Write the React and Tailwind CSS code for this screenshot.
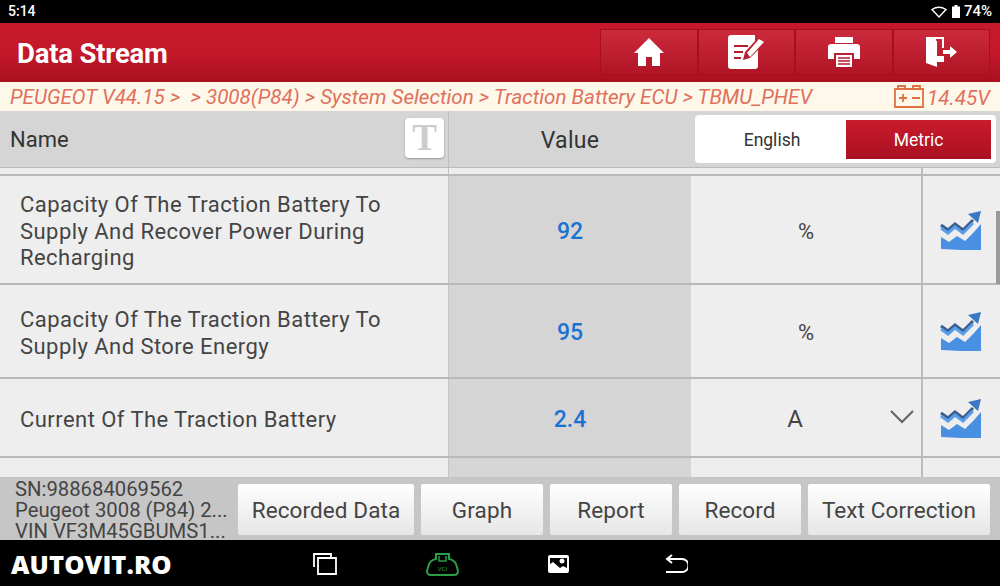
const rows = [
  { name: ['Capacity Of The Traction Battery To', 'Supply And Recover Power During', 'Recharging'], value: '92', unit: '%', h: 'h-[109px]' },
  { name: ['Capacity Of The Traction Battery To', 'Supply And Store Energy'], value: '95', unit: '%', h: 'h-[94px]' },
  { name: ['Current Of The Traction Battery'], value: '2.4', unit: 'A', h: 'h-[79px]', select: true },
];

const actions = [
  { label: 'Recorded Data', w: 'w-[176px]' },
  { label: 'Graph', w: 'w-[122px]' },
  { label: 'Report', w: 'w-[122px]' },
  { label: 'Record', w: 'w-[122px]' },
  { label: 'Text Correction', w: 'w-[182px]' },
];

function GraphIcon() {
  return (
    <svg width="42" height="40" viewBox="0 0 42 40">
      <path d="M1 39V27l8 5 8-6 8 5 9-9 7-8v27z" fill="#4a90e2" />
      <path d="M1 15l7 5 7-6 8 6 10-10" fill="none" stroke="#3a5f8f" strokeWidth="3" />
      <path d="M1 18l7 5 7-6 8 6 10-10" fill="none" stroke="#5a9de8" strokeWidth="3" />
      <path d="M28 4l13-3-3 12z" fill="#3b78c4" />
    </svg>
  );
}

function Row({ row }) {
  return (
    <div className={`flex ${row.h} border-b-2 border-[#b9b9b9]`}>
      <div className="w-[449px] flex flex-col justify-center pl-5 pt-[5px] text-[22px] leading-[26.5px] tracking-[0.45px] text-[#444] border-r border-[#c4c4c4] bg-[#eeeeee]">
        {row.name.map((line) => (
          <div key={line} className="whitespace-nowrap">{line}</div>
        ))}
      </div>
      <div className="w-[242px] flex items-center justify-center pt-[5px] bg-[#d5d5d5] text-[#1a73d4] text-[23px] font-medium">
        {row.value}
      </div>
      <div className="w-[232px] relative flex items-center justify-center pt-[3px] bg-[#eeeeee] border-r-2 border-[#bdbdbd] text-[#444] text-[22px]">
        <span className={row.select ? 'mr-[22px] text-[24px]' : ''}>{row.unit}</span>
        {row.select && (
          <svg className="absolute right-[7px] top-[31px]" width="24" height="14" viewBox="0 0 24 14" fill="none" stroke="#666" strokeWidth="2.200">
            <path d="M1 1l11 11L23 1" />
          </svg>
        )}
      </div>
      <div className="flex-1 flex items-center justify-center bg-[#eeeeee] pr-[2px]">
        <GraphIcon />
      </div>
    </div>
  );
}

export default function App() {
  return (
    <div className="w-[1000px] h-[586px] overflow-hidden flex flex-col bg-black font-['Roboto',sans-serif]">
      {/* status bar */}
      <div className="h-[23px] flex items-center justify-between pl-2 pr-2 text-white text-[14px] font-medium">
        <span>5:14</span>
        <div className="flex items-center">
          <svg width="16" height="12" viewBox="0 0 16 12">
            <path d="M1 3.5Q8-1 15 3.5L8 11z" fill="none" stroke="white" strokeWidth="1.4" />
          </svg>
          <svg className="ml-[5px] mr-[4px]" width="8" height="13" viewBox="0 0 8 13">
            <path d="M2.5 0h3v1.500H8V13H0V1.500h2.500z" fill="white" />
          </svg>
          <span className="text-[15px]">74%</span>
        </div>
      </div>

      {/* title bar */}
      <div className="h-[59px] flex items-center justify-between bg-gradient-to-b from-[#c8192c] via-[#c5182b] to-[#a81020] pl-[17px] pr-[10px]">
        <span className="text-white text-[27.5px] font-bold tracking-[-0.2px] mt-[3px]">Data Stream</span>
        <div className="flex h-[46px] -mt-[2px]">
          <button className="w-[97.5px] flex items-center justify-center border border-[#a5101f] bg-gradient-to-b from-[#cc2a3c] to-[#b01425]">
            <svg width="30" height="30" viewBox="0 0 30 30">
              <path d="M15 1L0 16h4v13h8v-9h6v9h8V16h4z" fill="white" />
            </svg>
          </button>
          <button className="w-[97.5px] flex items-center justify-center border border-[#a5101f] bg-gradient-to-b from-[#cc2a3c] to-[#b01425]">
            <svg width="36" height="34" viewBox="0 0 36 34">
              <path d="M3 0h24v6L17 17l-2 8 7-2 8-8v16a3 3 0 0 1-3 3H3a3 3 0 0 1-3-3V3a3 3 0 0 1 3-3z" fill="white" />
              <path d="M6 11h14M6 17h9M6 23h7" stroke="#bb1a2c" strokeWidth="2.200" />
              <path d="M19 18L31 4l5 3-14 15z" fill="white" />
            </svg>
          </button>
          <button className="w-[97.5px] flex items-center justify-center border border-[#a5101f] bg-gradient-to-b from-[#cc2a3c] to-[#b01425]">
            <svg width="32" height="32" viewBox="0 0 32 32">
              <path d="M7 1h18v6H7z" fill="white" />
              <path d="M3 8h26a3 3 0 0 1 3 3v12h-6v-6H6v6H0V11a3 3 0 0 1 3-3z" fill="white" />
              <path d="M8 19h16v12H8z" fill="white" />
              <path d="M10 22h12M10 25h12M10 28h12" stroke="#bb1a2c" strokeWidth="1.400" />
            </svg>
          </button>
          <button className="w-[97.5px] flex items-center justify-center border border-[#a5101f] bg-gradient-to-b from-[#cc2a3c] to-[#b01425]">
            <svg width="32" height="32" viewBox="0 0 32 32">
              <path d="M1 1h18v11h-2V3h-6v26l-10-3z" fill="white" />
              <path d="M1 1l11 4v26L1 27z" fill="white" />
              <path d="M12 20h7v6h-7z" fill="white" />
              <path d="M18 14h7v-4l7 6-7 6v-4h-7z" fill="white" />
            </svg>
          </button>
        </div>
      </div>

      {/* breadcrumb */}
      <div className="h-[29px] flex items-center justify-between bg-[#fdf8ea] pl-[10px] pr-[10px] text-[#e0705c] italic text-[20.6px]">
        <span className="whitespace-pre mt-[1px]">PEUGEOT V44.15 &gt;  &gt; 3008(P84) &gt; System Selection &gt; Traction Battery ECU &gt; TBMU_PHEV</span>
        <div className="flex items-center gap-[3px]">
          <svg width="30" height="23" viewBox="0 0 30 23" fill="none" stroke="#e0703f" strokeWidth="1.800">
            <path d="M1 4h28v18H1zM4 4V1h7v3M19 4V1h7v3M5 13h8M9 9v8M18 13h8" />
          </svg>
          <span className="mt-[4px]">14.45V</span>
        </div>
      </div>

      {/* table head */}
      <div className="h-[57px] flex bg-[#d5d5d5] border-b border-[#bbbbbb] text-[#333]">
        <div className="w-[449px] flex items-center justify-between pl-[10px] pr-[4px] text-[22px] border-r border-[#bdbdbd]">
          <span>Name</span>
          <div className="w-[39px] h-[40px] -mt-[2px] flex items-center justify-center bg-white rounded-[4px] shadow-[0_1px_2px_rgba(0,0,0,0.3)] font-['Liberation_Serif',serif] text-[#cccccc] text-[37px] font-bold">
            T
          </div>
        </div>
        <div className="w-[242px] flex items-center justify-center pt-[5px] text-[23px] tracking-[0.3px]">Value</div>
        <div className="flex-1 pl-[4px] pr-[4px] pt-[4px]">
          <div className="h-[48px] bg-white rounded-[4px] flex items-center justify-between pl-[4px] pr-[5px]">
            <span className="w-[146px] text-center text-[17.5px] pt-[2px]">English</span>
            <span className="w-[145px] h-[39px] flex items-center justify-center pt-[2px] text-white text-[17.5px] bg-gradient-to-b from-[#ca1a2d] to-[#a91122]">Metric</span>
          </div>
        </div>
      </div>

      {/* rows */}
      <div className="h-[309px] overflow-hidden relative bg-[#eeeeee]">
        <div className="flex h-[8px] border-b-2 border-[#b9b9b9]">
          <div className="w-[449px] border-r border-[#c4c4c4]" />
          <div className="w-[242px]" />
          <div className="w-[232px] border-r-2 border-[#bdbdbd]" />
        </div>
        {rows.map((row) => (
          <Row key={row.value} row={row} />
        ))}
        <div className="flex h-[24px]">
          <div className="w-[449px] border-r border-[#c4c4c4]" />
          <div className="w-[242px] bg-[#d5d5d5]" />
          <div className="w-[232px] border-r-2 border-[#bdbdbd]" />
        </div>
        <div className="absolute right-0 top-[43px] w-[4px] h-[73px] bg-[#9a9a9a]" />
      </div>

      {/* footer actions */}
      <div className="h-[63px] flex items-center bg-[#c6c6c6]">
        <div className="w-[238px] pl-[15px] mt-[3px] text-[#444] text-[20.3px] leading-[21px] whitespace-nowrap">
          <div>SN:988684069562</div>
          <div>Peugeot 3008 (P84) 2...</div>
          <div>VIN VF3M45GBUMS1...</div>
        </div>
        <div className="flex gap-[7px] mt-[1px]">
          {actions.map((action) => (
            <button
              key={action.label}
              className={`${action.w} h-[51px] pt-[3px] bg-gradient-to-b from-[#ffffff] to-[#e6e6e6] text-[#444] text-[22.5px] tracking-[0.1px] rounded-[2px]`}
            >
              {action.label}
            </button>
          ))}
        </div>
      </div>

      {/* nav bar */}
      <div className="h-[46px] flex items-center relative bg-black">
        <span className="ml-[11px] mt-[3px] text-white font-['Open_Sans',sans-serif] font-extrabold text-[25.5px] tracking-[0.1px]">AUTOVIT.RO</span>
        <svg className="absolute left-[313px] top-[13px]" width="24" height="22" viewBox="0 0 24 22" fill="none" stroke="white" strokeWidth="1.800">
          <path d="M1 14V1h17v4" />
          <path d="M5 5h18v16H5z" />
        </svg>
        <svg className="absolute left-[426px] top-[13px]" width="33" height="23" viewBox="0 0 33 23" fill="none" stroke="#2a9d46" strokeWidth="2">
          <path d="M10 1h13v5q5 1 7 5l2 7q0 4-4 4H5q-4 0-4-4l2-7q2-4 7-5z" />
          <path d="M13 3v5h7V3" strokeWidth="1.500" />
          <text x="16.500" y="18" textAnchor="middle" fontSize="6" fill="#2a9d46" stroke="none" fontFamily="Roboto, sans-serif">VCI</text>
        </svg>
        <svg className="absolute left-[548px] top-[15px]" width="21" height="18" viewBox="0 0 21 18">
          <path fillRule="evenodd" d="M2 0h17a2 2 0 0 1 2 2v14a2 2 0 0 1-2 2H2a2 2 0 0 1-2-2V2a2 2 0 0 1 2-2zM2 3v6l3-2 7 6 3-2 4 2V3z" fill="white" />
          <circle cx="14" cy="6" r="2.500" fill="white" />
        </svg>
        <svg className="absolute left-[665px] top-[14px]" width="23" height="20" viewBox="0 0 23 20" fill="none" stroke="white" strokeWidth="2">
          <path d="M7 1L2 5l5 4" />
          <path d="M2 5h15a5.500 5.500 0 0 1 0 13H1" />
        </svg>
      </div>
    </div>
  );
}
